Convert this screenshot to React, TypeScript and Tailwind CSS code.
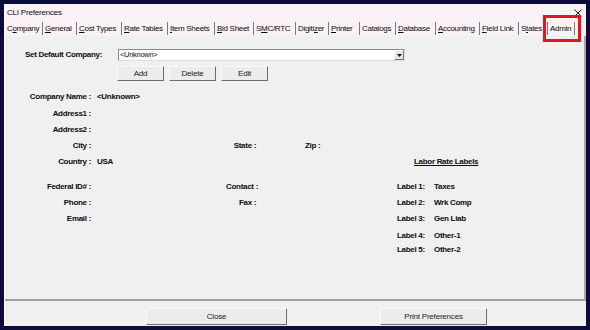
import React from "react";

const tabs: { pre: string; u: string; post: string; w: number }[] = [
  { pre: "C", u: "o", post: "mpany", w: 38 },
  { pre: "", u: "G", post: "eneral", w: 34 },
  { pre: "", u: "C", post: "ost Types", w: 45 },
  { pre: "", u: "R", post: "ate Tables", w: 46 },
  { pre: "", u: "I", post: "tem Sheets", w: 47 },
  { pre: "", u: "B", post: "id Sheet", w: 39 },
  { pre: "S", u: "M", post: "C/RTC", w: 42 },
  { pre: "Digiti", u: "z", post: "er", w: 33 },
  { pre: "", u: "P", post: "rinter", w: 31 },
  { pre: "Catalo", u: "g", post: "s", w: 36 },
  { pre: "", u: "D", post: "atabase", w: 40 },
  { pre: "", u: "A", post: "ccounting", w: 44 },
  { pre: "", u: "F", post: "ield Link", w: 39 },
  { pre: "S", u: "t", post: "ates", w: 29 },
  { pre: "Admin", u: "", post: "", w: 27 },
];

const Btn = ({ children, w, h }: { children: React.ReactNode; w: string; h: string }) => (
  <div
    className={`${w} ${h} flex items-center justify-center bg-[#ececec] border border-t-[#fbfbfb] border-l-[#fbfbfb] border-r-[#6e6e6e] border-b-[#6e6e6e] text-[8px] tracking-[-0.2px] text-[#222]`}
  >
    {children}
  </div>
);

const Row = ({
  h = "h-[16px]",
  mt = "",
  a = "",
  av = "",
  b = "",
  c = "",
  d = null as React.ReactNode,
}: {
  h?: string;
  mt?: string;
  a?: string;
  av?: string;
  b?: string;
  c?: string;
  d?: React.ReactNode;
}) => (
  <div className={`flex items-center ${h} ${mt}`}>
    <div className="w-[86px] text-right whitespace-pre">{a}</div>
    <div className="w-[6px]" />
    <div className="w-[84px]">{av}</div>
    <div className="w-[77px] text-right whitespace-pre">{b}</div>
    <div className="w-[47px]" />
    <div className="w-[92px]">{c}</div>
    <div className="flex-1">{d}</div>
  </div>
);

const Lbl = ({ n, v }: { n: string; v: string }) => (
  <div className="flex">
    <div className="w-[37px]">Label {n}:</div>
    <div>{v}</div>
  </div>
);

export default function App() {
  return (
    <div
      className="relative w-[590px] h-[330px] bg-[#0b0b3c] p-[4px] flex flex-col text-[#0d0d0d]"
      style={{ fontFamily: '"Liberation Sans", Arial, sans-serif' }}
    >
      <div className="flex-1 flex flex-col bg-[#f0f0f0] border-l border-white">
        {/* Title bar */}
        <div className="h-[16px] bg-[#faf2f6] flex items-center justify-between pl-[2px] pr-[4px]">
          <span className="text-[8px] tracking-[-0.2px] mt-[1px]">CLI Preferences</span>
          <svg width="8" height="8" viewBox="0 0 8 8" className="mt-[1px]">
            <path d="M0.5 0.5 L7.5 7.5 M7.5 0.5 L0.5 7.5" stroke="#222" strokeWidth="1" />
          </svg>
        </div>
        {/* Tabs */}
        <div className="h-[16px] bg-[#faf2f6] flex items-start pt-[2px]">
          {tabs.map((t, i) => (
            <div
              key={i}
              className="h-[13px] flex items-center pl-[2px] border-r border-r-[#7a7a7a] text-[8px] tracking-[-0.3px] whitespace-pre"
              style={{ width: t.w }}
            >
              {t.pre}
              {t.u && <u>{t.u}</u>}
              {t.post}
            </div>
          ))}
        </div>
        {/* Panel */}
        <div className="flex-1 flex flex-col border-r-2 border-r-[#a8a8a8] border-b-2 border-b-[#a0a0a0] text-[8px] font-bold tracking-[-0.3px] pt-[13px]">
          <div className="flex items-center h-[12px]">
            <div className="w-[20px]" />
            <div className="w-[93px]">Set Default Company:</div>
            <div className="w-[287px] h-[12px] bg-white border border-t-[#8a8a8a] border-l-[#8a8a8a] border-r-[#dcdcdc] border-b-[#dcdcdc] flex items-center justify-between">
              <span className="font-normal text-[7.5px] pl-[1px]">&lt;Unknown&gt;</span>
              <div className="w-[10px] h-[10px] bg-[#e6e6e6] border border-t-white border-l-white border-r-[#777] border-b-[#777] flex items-center justify-center">
                <svg width="5" height="3" viewBox="0 0 5 3">
                  <path d="M0 0 H5 L2.5 3 Z" fill="#111" />
                </svg>
              </div>
            </div>
          </div>
          <div className="flex mt-[5px] h-[14px] gap-[5px] pl-[112px] font-normal">
            <Btn w="w-[47px]" h="h-[15px]">Add</Btn>
            <Btn w="w-[47px]" h="h-[15px]">Delete</Btn>
            <Btn w="w-[47px]" h="h-[15px]">Edit</Btn>
          </div>
          <Row mt="mt-[9px]" a="Company Name :" av="<Unknown>" />
          <Row mt="mt-[1px]" a="Address1 :" />
          <Row a="Address2 :" />
          <Row a="City :" b="State : " c="Zip :" />
          <Row
            a="Country :"
            av="USA"
            d={<div className="ml-[17px] underline">Labor Rate Labels</div>}
          />
          <Row mt="mt-[9px]" a="Federal ID# :" b="Contact :" d={<Lbl n="1" v="Taxes" />} />
          <Row a="Phone :" b="Fax : " d={<Lbl n="2" v="Wrk Comp" />} />
          <Row a="Email :" d={<Lbl n="3" v="Gen Liab" />} />
          <Row h="h-[15px]" mt="mt-[1px]" d={<Lbl n="4" v="Other-1" />} />
          <Row h="h-[14px]" d={<Lbl n="5" v="Other-2" />} />
        </div>
        {/* Bottom buttons */}
        <div className="h-[25px] flex items-start pt-[7px] pl-[141px]">
          <Btn w="w-[141px]" h="h-[17px]">Close</Btn>
          <div className="w-[93px]" />
          <Btn w="w-[107px]" h="h-[17px]">Print Preferences</Btn>
        </div>
      </div>
      {/* Highlight box */}
      <div className="absolute left-[543px] top-[15px] w-[38px] h-[27px] border-[3px] border-[#e6141e]" />
    </div>
  );
}
